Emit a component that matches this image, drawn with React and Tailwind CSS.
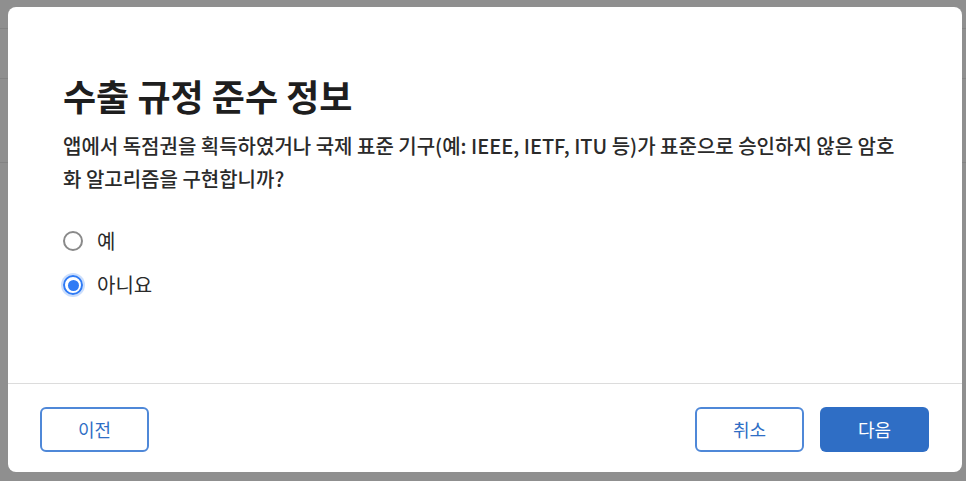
import React, { useState } from "react";

const font = { fontFamily: '"Noto Sans CJK KR", "Noto Sans", sans-serif' };

function Radio({ checked, label, onClick }) {
    return (
        <button onClick={onClick} className="flex items-center h-6 gap-[14px] text-left">
            {checked ? (
                <span className="w-[20px] h-[20px] rounded-full border-2 border-[#2f7bf5] ring-2 ring-[#2f7bf5]/25 flex items-center justify-center">
                    <span className="w-[11px] h-[11px] rounded-full bg-[#2f7bf5]" />
                </span>
            ) : (
                <span className="w-[20px] h-[20px] rounded-full border-2 border-[#8a8a8a]" />
            )}
            <span className="text-[20px] text-[#2a2a2a]">{label}</span>
        </button>
    );
}

export default function App() {
    const [answer, setAnswer] = useState("no");

    return (
        <div style={font} className="relative w-full h-[481px] bg-[#8f8f8f] overflow-hidden pt-[7px] pl-[8px]">
            {/* backdrop lines */}
            <div className="absolute left-0 right-0 top-[28px] h-px bg-[#838383]" />
            <div className="absolute left-0 right-0 top-[78px] h-px bg-[#838383]" />
            <div className="absolute left-0 right-0 top-[162px] h-px bg-[#838383]" />

            {/* Dialog */}
            <div className="relative w-[954px] h-[465px] bg-white rounded-[8px] flex flex-col overflow-hidden">
                <div className="flex-1 px-[55px] pt-[66px]">
                    <h1 className="text-[36px] leading-[44px] font-bold text-[#1e1e1e]">수출 규정 준수 정보</h1>
                    <p className="mt-[12px] text-[20px] leading-[33px] font-medium text-[#2a2a2a]">
                        앱에서 독점권을 획득하였거나 국제 표준 기구(예: IEEE, IETF, ITU 등)가 표준으로 승인하지 않은 암호화 알고리즘을 구현합니까?
                    </p>
                    <div className="mt-[34px] flex flex-col gap-[20px]">
                        <Radio checked={answer === "yes"} label="예" onClick={() => setAnswer("yes")} />
                        <Radio checked={answer === "no"} label="아니요" onClick={() => setAnswer("no")} />
                    </div>
                </div>

                {/* Footer */}
                <div className="border-t border-[#dcdcdc] h-[89px] flex items-start justify-between pl-[32px] pr-[33px] pt-[23px]">
                    <button className="w-[109px] h-[45px] rounded-[6px] border-2 border-[#4f88d8] text-[#2f6ec5] text-[18px]">이전</button>
                    <div className="flex gap-[16px]">
                        <button className="w-[109px] h-[45px] rounded-[6px] border-2 border-[#4f88d8] text-[#2f6ec5] text-[18px]">취소</button>
                        <button className="w-[109px] h-[45px] rounded-[6px] bg-[#2f6ec5] text-white text-[18px]">다음</button>
                    </div>
                </div>
            </div>
        </div>
    );
}
